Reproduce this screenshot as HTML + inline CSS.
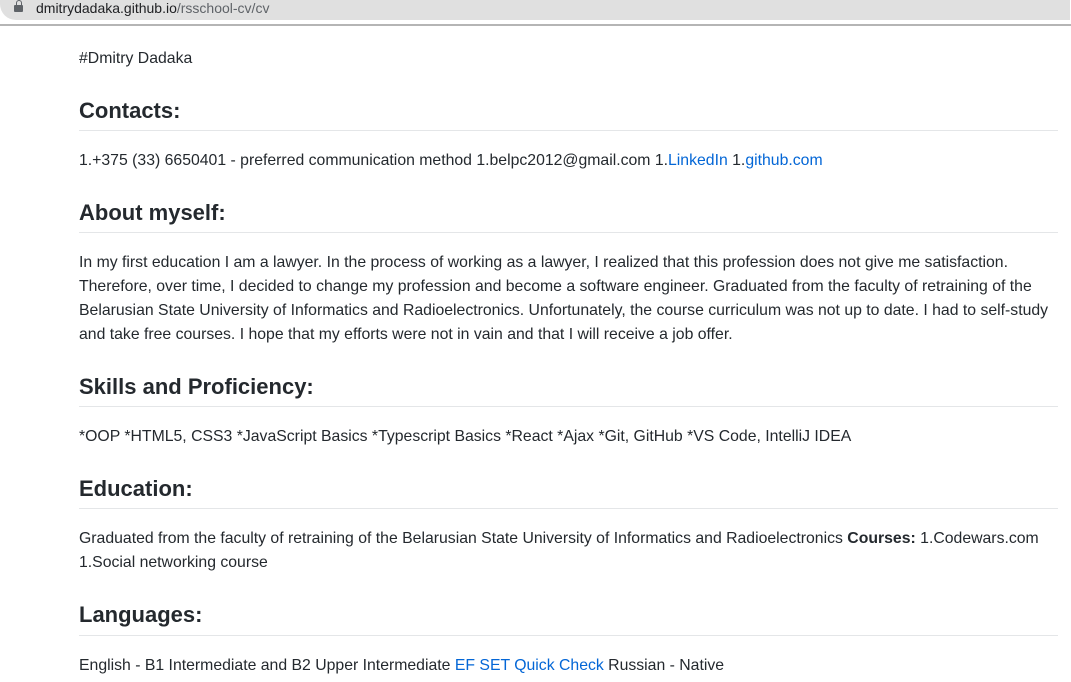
<!DOCTYPE html>
<html><head><meta charset="utf-8">
<style>
html,body{margin:0;padding:0;background:#fff;width:1071px;height:682px;overflow:hidden;position:relative;font-family:"Liberation Sans",sans-serif;color:#24292e}
.bar{position:absolute;left:0;top:-12px;width:1070px;height:32px;background:#e0e0e0;border-radius:0 0 0 16px}
.sep{position:absolute;left:0;top:24px;width:1071px;height:2px;background:#b5b5b5}
.url{position:absolute;left:36px;top:0;font-size:14px;line-height:16px;color:#202124}
.url span{color:#5f6368}
.lock{position:absolute;left:14px;top:5px;width:9px;height:7px;background:#5f6368;border-radius:1px}
.lock:before{content:"";position:absolute;left:1.5px;top:-5px;width:4px;height:5px;border:1.5px solid #5f6368;border-bottom:none;border-radius:3px 3px 0 0}
.t{position:absolute;left:79px;font-size:15.8px;line-height:20px;white-space:nowrap}
.h{position:absolute;left:79px;font-size:22px;font-weight:bold;line-height:28px;white-space:nowrap;color:#24292e}
.r{position:absolute;left:79px;width:979px;height:1px;background:#e4e6e8}
a{color:#0366d6;text-decoration:none}
</style></head><body>
<div class="bar"></div><div class="lock"></div>
<div class="url">dmitrydadaka.github.io<span>/rsschool-cv/cv</span></div>
<div class="sep"></div>

<div class="t" style="top:49px">#Dmitry Dadaka</div>

<div class="h" style="top:97px">Contacts:</div><div class="r" style="top:130px"></div>
<div class="t" style="top:151px">1.+375 (33) 6650401 - preferred communication method 1.belpc2012@gmail.com 1.<a>LinkedIn</a> 1.<a>github.com</a></div>

<div class="h" style="top:199px">About myself:</div><div class="r" style="top:232px"></div>
<div class="t" style="top:253px">In my first education I am a lawyer. In the process of working as a lawyer, I realized that this profession does not give me satisfaction.</div>
<div class="t" style="top:277px">Therefore, over time, I decided to change my profession and become a software engineer. Graduated from the faculty of retraining of the</div>
<div class="t" style="top:301px">Belarusian State University of Informatics and Radioelectronics. Unfortunately, the course curriculum was not up to date. I had to self-study</div>
<div class="t" style="top:325px">and take free courses. I hope that my efforts were not in vain and that I will receive a job offer.</div>

<div class="h" style="top:373px">Skills and Proficiency:</div><div class="r" style="top:406px"></div>
<div class="t" style="top:427px">*OOP *HTML5, CSS3 *JavaScript Basics *Typescript Basics *React *Ajax *Git, GitHub *VS Code, IntelliJ IDEA</div>

<div class="h" style="top:475px">Education:</div><div class="r" style="top:508px"></div>
<div class="t" style="top:529px">Graduated from the faculty of retraining of the Belarusian State University of Informatics and Radioelectronics <b>Courses:</b> 1.Codewars.com</div>
<div class="t" style="top:553px">1.Social networking course</div>

<div class="h" style="top:601px">Languages:</div><div class="r" style="top:635px"></div>
<div class="t" style="top:656px">English - B1 Intermediate and B2 Upper Intermediate <a>EF SET Quick Check</a> Russian - Native</div>
</body></html>
